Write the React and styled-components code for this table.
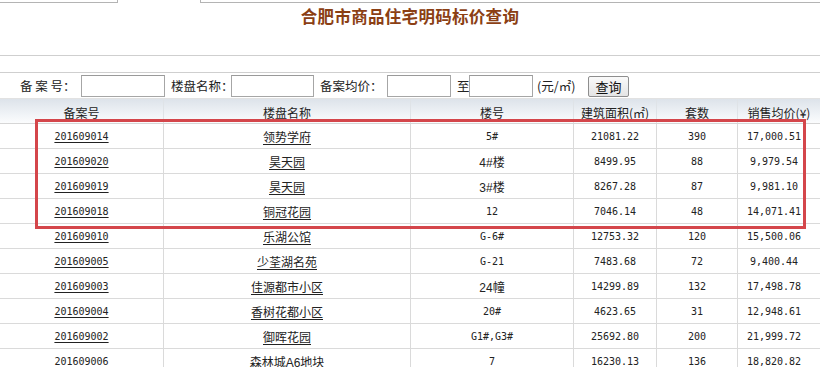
import React from "react";
import styled, { createGlobalStyle, css } from "styled-components";

const Global = createGlobalStyle`
  html, body { margin: 0; padding: 0; background: #fff; }
  body {
    font-family: "Liberation Sans", "Noto Sans CJK SC", sans-serif;
    font-size: 12px;
    color: #222;
    width: 820px;
    overflow: hidden;
  }
`;

const numFont = css`
  font-family: "DejaVu Sans Mono", "Noto Sans CJK SC", monospace;
  font-size: 10px;
`;

const Page = styled.div`
  width: 820px;
  position: relative;
`;

const TopStrip = styled.div`
  display: flex;
  height: 3px;
`;

const TopTab = styled.div`
  width: ${(p) => p.$w}px;
  margin-left: ${(p) => p.$ml || 0}px;
  height: 2px;
  border-bottom: 1px solid #b4b4b4;
  border-left: ${(p) => (p.$bl ? "1px solid #b4b4b4" : "none")};
  border-right: ${(p) => (p.$br ? "1px solid #b4b4b4" : "none")};
`;

const TitleBar = styled.div`
  height: 53px;
  box-sizing: border-box;
  border-bottom: 1px solid #cfcfcf;
  display: flex;
  justify-content: center;
  align-items: flex-start;
  padding-top: 3px;
`;

const Title = styled.h1`
  margin: 0;
  font-family: "Noto Sans CJK SC", sans-serif;
  font-size: 16.5px;
  line-height: 20px;
  font-weight: 700;
  color: #8b3f14;
  letter-spacing: 0.3px;
`;

const Gap = styled.div`
  height: 16px;
`;

const SearchRow = styled.div`
  height: 27px;
  box-sizing: border-box;
  border-top: 1px solid #cfcfcf;
  border-bottom: 1px solid #e2e2e2;
  display: flex;
  align-items: center;
  padding-left: 20px;
`;

const Label = styled.span`
  width: ${(p) => p.$w}px;
  margin-left: ${(p) => p.$ml || 0}px;
  flex: none;
  font-family: "Noto Sans CJK SC", sans-serif;
  font-size: 12.5px;
  white-space: nowrap;
  color: #222;
`;

const Input = styled.input`
  width: ${(p) => p.$w}px;
  height: 22px;
  box-sizing: border-box;
  flex: none;
  margin: 1px 0 0 0;
  padding: 0;
  border: 1px solid #a6a6a6;
  border-top-color: #9a9a9a;
  background: #fff;
  outline: none;
`;

const Button = styled.button`
  width: 41px;
  height: 21px;
  margin-top: 1px;
  flex: none;
  padding: 0;
  font-family: "Noto Sans CJK SC", sans-serif;
  font-size: 13px;
  line-height: 19px;
  color: #111;
  border: 1px solid #8e8e8e;
  border-radius: 2px;
  background: linear-gradient(#fafafa, #e4e4e4);
`;

const cols = "164px 247px 163px 83px 81px 82px";

const HeadRow = styled.div`
  display: grid;
  grid-template-columns: ${cols};
  height: 25px;
  box-sizing: border-box;
  border-bottom: 1px solid #d6d6d6;
  background: linear-gradient(#dde3ea, #f2f5f8 70%, #fbfcfd);
`;

const HeadCell = styled.div`
  display: flex;
  align-items: center;
  justify-content: center;
  box-sizing: border-box;
  border-right: ${(p) => (p.$last ? "none" : "1px solid #dfe3e7")};
  font-family: "Noto Sans CJK SC", sans-serif;
  font-size: 12px;
  color: #222;
  white-space: nowrap;
  padding-top: 3px;
`;

const Row = styled.div`
  display: grid;
  grid-template-columns: ${cols};
  height: 25px;
  box-sizing: border-box;
  border-bottom: 1px solid #dadada;
`;

const Cell = styled.div`
  display: flex;
  align-items: center;
  justify-content: center;
  box-sizing: border-box;
  border-right: ${(p) => (p.$last ? "none" : "1px solid #dadada")};
  padding-right: ${(p) => p.$pr || 0}px;
  font-size: 12px;
  ${(p) => p.$num && numFont};
  color: #222;
  white-space: nowrap;
  padding-top: 1px;
`;

const Link = styled.a`
  color: #222;
  text-decoration: underline;
  text-underline-offset: 2px;
  font-size: 12px;
  ${(p) => p.$num && numFont};
  cursor: pointer;
`;

const TableWrap = styled.div`
  position: relative;
`;

const Highlight = styled.div`
  position: absolute;
  left: 35px;
  top: 20px;
  width: 771px;
  height: 110px;
  box-sizing: border-box;
  border: 3px solid #d4464b;
  pointer-events: none;
`;

const rows = [
  ["201609014", "领势学府", "5#", "21081.22", "390", "17,000.51"],
  ["201609020", "昊天园", "4#楼", "8499.95", "88", "9,979.54"],
  ["201609019", "昊天园", "3#楼", "8267.28", "87", "9,981.10"],
  ["201609018", "铜冠花园", "12", "7046.14", "48", "14,071.41"],
  ["201609010", "乐湖公馆", "G-6#", "12753.32", "120", "15,500.06"],
  ["201609005", "少荃湖名苑", "G-21", "7483.68", "72", "9,400.44"],
  ["201609003", "佳源都市小区", "24幢", "14299.89", "132", "17,498.78"],
  ["201609004", "香树花都小区", "20#", "4623.65", "31", "12,948.61"],
  ["201609002", "御晖花园", "G1#,G3#", "25692.80", "200", "21,999.72"],
  ["201609006", "森林城A6地块", "7", "16230.13", "136", "18,820.82"],
];

const headers = ["备案号", "楼盘名称", "楼号", "建筑面积(㎡)", "套数", "销售均价(¥)"];

export default function App() {
  return (
    <Page>
      <Global />
      <TopStrip>
        <TopTab $w={117} $br />
        <TopTab $w={621} $ml={82} $bl />
      </TopStrip>
      <TitleBar>
        <Title>合肥市商品住宅明码标价查询</Title>
      </TitleBar>
      <Gap />
      <SearchRow>
        <Label $w={61}>备 案 号：</Label>
        <Input $w={84} />
        <Label $w={60} $ml={6}>楼盘名称：</Label>
        <Input $w={83} />
        <Label $w={67} $ml={6}>备案均价：</Label>
        <Input $w={64} />
        <Label $w={12} $ml={6}>至</Label>
        <Input $w={64} />
        <Label $w={51} $ml={4}>(元/㎡)</Label>
        <Button>查询</Button>
      </SearchRow>
      <TableWrap>
        <HeadRow>
          {headers.map((h, i) => (
            <HeadCell key={h} $last={i === headers.length - 1}>
              {h}
            </HeadCell>
          ))}
        </HeadRow>
        {rows.map((r) => (
          <Row key={r[0]}>
            <Cell>
              <Link $num>{r[0]}</Link>
            </Cell>
            <Cell>
              <Link>{r[1]}</Link>
            </Cell>
            <Cell $num={/^[0-9G#,\-]+$/.test(r[2])}>{r[2]}</Cell>
            <Cell $num>{r[3]}</Cell>
            <Cell $num>{r[4]}</Cell>
            <Cell $num $last $pr={10}>
              {r[5]}
            </Cell>
          </Row>
        ))}
        <Highlight />
      </TableWrap>
    </Page>
  );
}
